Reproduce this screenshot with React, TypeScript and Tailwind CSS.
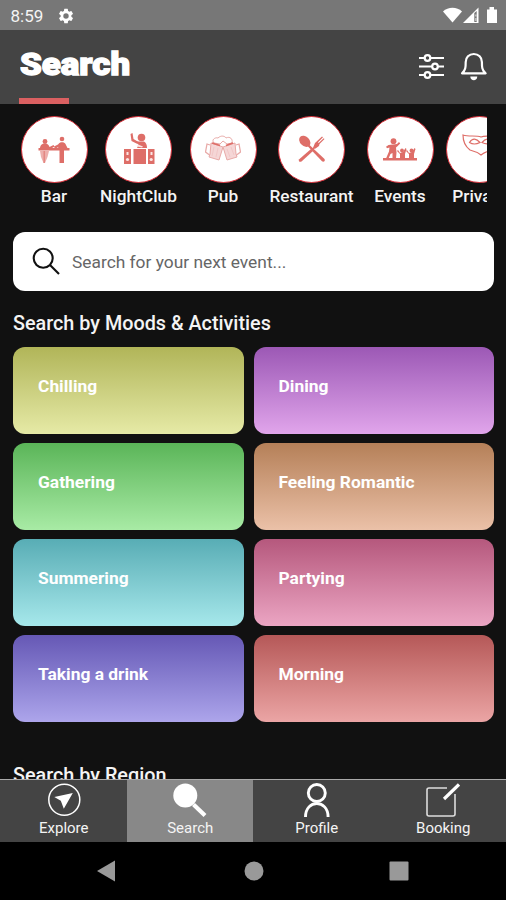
import type { ReactNode } from "react";

const RED = "#de6e68";

function BarIcon() {
  return (
    <svg width="34" height="30" viewBox="0 0 34 30" fill={RED}>
      <rect x="1.500" y="13" width="31" height="2.500" />
      <circle cx="8" cy="6.500" r="2.400" />
      <path d="M3 14c0-4 2-5.500 5-5.500s4 2 4.500 3.500l4-2 1 1.500-4 2.500z" />
      <circle cx="25" cy="4" r="2.300" />
      <path d="M21 14l.5-5c1-2.500 6-2.500 7 0l2.500 5z" />
      <path d="M17 11.500l5-2.500 1 2-5 3z" />
      <rect x="22.500" y="15" width="4.500" height="13" />
      <path d="M3 16h9l-1.500 6-2.500 6H6.500L4 22z" opacity=".55" />
      <path d="M6.500 16h1.500v12H6.500z" opacity=".6" />
    </svg>
  );
}

function ClubIcon() {
  return (
    <svg width="32" height="33" viewBox="0 0 32 33" fill={RED}>
      <path d="M7.500 2l2-1 1 6 5 3-1 2-6-3z" />
      <circle cx="18.500" cy="5.500" r="3.800" />
      <path d="M13 9.500h8c2 1 3 3.500 3 6.500H14l1.500-3z" />
      <rect x="10.500" y="17" width="12.500" height="15" />
      <rect x="1" y="17" width="7" height="15" />
      <rect x="25" y="17" width="6.500" height="15" />
      <g fill="#fbe6e4">
        <path d="M3.500 20h2v3h-2zM27.500 20h2v3h-2z" />
        <circle cx="4.500" cy="27.500" r="1.600" />
        <circle cx="28.200" cy="27.500" r="1.600" />
        <path d="M15 12.500l5 2-1 1-5-1z" />
      </g>
    </svg>
  );
}

function PubIcon() {
  return (
    <svg width="36" height="27" viewBox="0 0 36 27" fill="none" stroke="#e8aaa8" strokeWidth="1">
      <path d="M6 8l12 4-4 13-10-3 1-3z" fill="#f5d6d6" />
      <path d="M30 8l-12 4 4 13 10-3-1-3z" fill="#f5d6d6" />
      <path d="M5 10l-3-1-1.500 8 4 3M31 10l3-1 1.500 8-4 3" strokeWidth="1.300" />
      <path d="M9 8C6 5 10 2 13 3c3-3 7-2 8 0 4-2 7 1 6 5l-5 1-4-3-3 3z" fill="#fff" />
      <path d="M7 8l8 2.500M21 10.500l7-2.500" stroke="#de6e68" strokeWidth="1.800" />
      <path d="M9 12l-2 9M13 13l-2 9M22 14l3 8M26 12l3 8" opacity=".35" />
    </svg>
  );
}

function CutleryIcon() {
  return (
    <svg width="28" height="28" viewBox="0 0 28 28" fill={RED}>
      <ellipse cx="6.800" cy="6.300" rx="4.700" ry="6.400" transform="rotate(-45 6.800 6.300)" />
      <path d="M9.500 11l1.500-1.500L26.500 24c1.200 2-1 3.500-2.500 2.300z" />
      <path d="M13 14l2 2L3.500 26.500c-2 1.200-3.500-.8-2.300-2.300z" />
      <path d="M14.500 14l2.500-6L24 1.500l1 .7-5 5 .7.7 5-4.700.8.9-5 4.800-.5 2-3.500 2.600-2 .5-1.500 1.500z" />
    </svg>
  );
}

function EventsIcon() {
  return (
    <svg width="34" height="24" viewBox="0 0 34 24" fill={RED}>
      <circle cx="10.500" cy="3.200" r="2.900" />
      <path d="M5.500 7l8.500-1 2-2 1.200 1.500-3 3-1.200 1 .5 5-.5 6h-3.500v-5.500l-2 1-2 4.500H3l3-7 .5-4-2.500.8-1-1.500z" />
      <path d="M0 20h34v2.500H0z" />
      <path d="M15 12l2 3 3-1 2.500-4 1 1-1.500 5v4h-5v-4l-3-3zM24 12l2 3 3-1 2.500-4 1 1-1.500 5v4h-5v-4l-3-3z" />
      <circle cx="19" cy="12.500" r="1.900" />
      <circle cx="28.500" cy="12.500" r="1.900" />
    </svg>
  );
}

function MaskIcon() {
  return (
    <svg width="38" height="24" viewBox="0 0 38 24" fill="none" stroke={RED} strokeWidth="1.200">
      <path d="M1 2c6 2 13 0 18 2 5-2 12 0 18-2 0 6-2 12-6 15-5 1-8 2-12 5-4-3-7-4-11-5C4 14 1 8 1 2z" />
      <path d="M7.500 9.500c3-5 7-4 10.500 0-4 2-7.500 2-10.500 0zM30.500 9.500c-3-5-7-4-10.500 0 4 2 7.500 2 10.500 0z" />
    </svg>
  );
}

const categories: { label: string; box: string; icon: ReactNode; pad: string }[] = [
  { label: "Bar", box: "w-[67px]", icon: <BarIcon />, pad: "" },
  { label: "NightClub", box: "w-[77px]", icon: <ClubIcon />, pad: "pb-[2px]" },
  { label: "Pub", box: "w-[67px]", icon: <PubIcon />, pad: "pb-[2px]" },
  { label: "Restaurant", box: "w-[85px]", icon: <CutleryIcon />, pad: "pb-[1px]" },
  { label: "Events", box: "w-[67px]", icon: <EventsIcon />, pad: "" },
  { label: "Private", box: "w-[67px]", icon: <MaskIcon />, pad: "pb-[10px] pl-[2px]" },
];

const moods = [
  { label: "Chilling", color: "from-[#b1b558] to-[#e6eaa6]" },
  { label: "Dining", color: "from-[#9c58b5] to-[#e1a5eb]" },
  { label: "Gathering", color: "from-[#5ab558] to-[#a8eba5]" },
  { label: "Feeling Romantic", color: "from-[#b58058] to-[#ebc1a8]" },
  { label: "Summering", color: "from-[#58adb5] to-[#a6e8eb]" },
  { label: "Partying", color: "from-[#b5587d] to-[#eba5c3]" },
  { label: "Taking a drink", color: "from-[#6658b5] to-[#ada5eb]" },
  { label: "Morning", color: "from-[#b55858] to-[#eba5a5]" },
];

function StatusBar() {
  return (
    <div className="flex h-[30px] shrink-0 items-center bg-[#777] pl-[10.500px] pr-[8px] text-[#f4f4f4]">
      <span className="mt-[2px] w-[46.500px] text-[17px] leading-none">8:59</span>
      <svg className="mt-px" width="18" height="18" viewBox="0 0 24 24" fill="white">
        <path d="M19.140 12.940a7 7 0 0 0 0-1.880l2.030-1.580a.5.5 0 0 0 .12-.61l-1.920-3.320a.5.5 0 0 0-.59-.22l-2.390.96a7 7 0 0 0-1.620-.94l-.36-2.540a.5.5 0 0 0-.48-.41h-3.840a.5.5 0 0 0-.47.41l-.36 2.540a7 7 0 0 0-1.620.94l-2.390-.96a.5.5 0 0 0-.59.22L2.740 8.870a.5.5 0 0 0 .12.61l2.030 1.580a7 7 0 0 0 0 1.880l-2.030 1.580a.5.5 0 0 0-.12.61l1.920 3.320c.12.220.370.290.590.220l2.390-.96c.5.380 1.030.7 1.620.940l.36 2.540c.05.240.240.410.480.410h3.840c.24 0 .44-.17.470-.41l.36-2.540a7 7 0 0 0 1.620-.94l2.390.96c.22.080.470 0 .59-.22l1.920-3.320a.5.5 0 0 0-.12-.61zM12 15.600a3.600 3.600 0 1 1 0-7.200 3.600 3.600 0 0 1 0 7.200z" />
      </svg>
      <svg className="ml-auto" width="55" height="18" viewBox="0 0 55 18" fill="white">
        <path d="M0 5.500C5 .6 14 .6 19 5.500L9.500 16.500z" />
        <path d="M35.500 1.500V17H20z" />
        <path d="M31.300 7v9h2.400V5z" fill="#777" />
        <path d="M32.500 8.500v2h.8v-2zM32.500 12v3h.8v-3z" />
        <path d="M44 3.500h2.500V1H51v2.500h3V17H44z" />
      </svg>
    </div>
  );
}

function Header() {
  return (
    <header className="flex h-[74px] shrink-0 flex-col justify-between bg-[#444]">
      <div className="flex h-[68px] items-center pl-[19.500px] pr-[19px]">
        <h1 className="origin-left scale-x-[1.090] text-[32px] font-black leading-none text-white [-webkit-text-stroke:1.400px_white]">
          Search
        </h1>
        <svg className="ml-auto mt-[5px]" width="27" height="27" viewBox="0 0 27 27" fill="none" stroke="white" strokeWidth="2.200">
          <path d="M1 5h5.500M12 5h14M1 13.500h13M19.500 13.500h6.500M1 22h5.500M12 22h14" />
          <circle cx="9.500" cy="5" r="2.800" />
          <circle cx="17" cy="13.500" r="2.800" />
          <circle cx="9.500" cy="22" r="2.800" />
        </svg>
        <svg className="ml-[15px] mt-[4px]" width="27" height="30" viewBox="0 0 27 30" fill="none" stroke="white" strokeWidth="2.200" strokeLinejoin="round">
          <path d="M2 22.300c3.700-3 3.700-6.800 3.700-11.300 0-4.500 3.300-8 8.100-8s8.100 3.500 8.100 8c0 4.500 0 8.300 3.700 11.300z" />
          <path d="M10.300 25.500h7c0 5-7 5-7 0z" fill="white" stroke="none" />
        </svg>
      </div>
      <div className="ml-[18.500px] h-[6px] w-[50px] bg-[#db6061]" />
    </header>
  );
}

const tabs: { label: string; icon: ReactNode }[] = [
  {
    label: "Explore",
    icon: (
      <svg width="34" height="34" viewBox="0 0 34 34">
        <circle cx="17.300" cy="16.700" r="15.500" fill="none" stroke="white" strokeWidth="1.500" />
        <path d="M25.800 10L7.300 14l6.500 3.800 3 8z" fill="white" />
      </svg>
    ),
  },
  {
    label: "Search",
    icon: (
      <svg width="34" height="34" viewBox="0 0 34 34">
        <circle cx="12.300" cy="12.500" r="12" fill="white" />
        <path d="M20.500 21.500L32 32.500" stroke="white" strokeWidth="4.200" />
      </svg>
    ),
  },
  {
    label: "Profile",
    icon: (
      <svg width="34" height="34" viewBox="0 0 34 34" fill="none" stroke="white" strokeWidth="2.900">
        <circle cx="16.800" cy="10" r="8.500" />
        <path d="M5.500 34c0-18 22.600-18 22.600 0" />
      </svg>
    ),
  },
  {
    label: "Booking",
    icon: (
      <svg width="34" height="34" viewBox="0 0 34 34" fill="none" stroke="#ddd">
        <path d="M21 5H3a2 2 0 0 0-2 2v24a2 2 0 0 0 2 2h24a2 2 0 0 0 2-2V11" strokeWidth="1.600" />
        <path d="M18 16L33 1.500" stroke="white" strokeWidth="3.200" />
      </svg>
    ),
  },
];

export default function App() {
  return (
    <div className="flex h-[900px] w-[506px] flex-col overflow-hidden bg-[#111] font-['Roboto',sans-serif] text-[#f4f4f4]">
      <StatusBar />
      <Header />
      <main className="flex min-h-0 flex-1 flex-col overflow-hidden">
        <div className="ml-[20.500px] mr-[19px] flex h-[128px] shrink-0 gap-[12.500px] overflow-hidden pt-[12px]">
          {categories.map((c) => (
            <div key={c.label} className={`flex shrink-0 flex-col items-center ${c.box}`}>
              <div className={`flex size-[67px] shrink-0 items-center justify-center rounded-full border border-[#d8303a] bg-white ${c.pad}`}>
                {c.icon}
              </div>
              <span className="mt-[3px] whitespace-nowrap text-[17.300px] font-medium leading-[20px]">{c.label}</span>
            </div>
          ))}
        </div>
        <div className="ml-[13px] mr-[12px] flex h-[59px] shrink-0 items-center rounded-[12px] bg-white pl-[19px]">
          <svg width="29" height="29" viewBox="0 0 29 29" fill="none" stroke="#111" strokeWidth="2.100">
            <circle cx="11.200" cy="11.200" r="9.500" />
            <path d="M18 18l9 9" />
          </svg>
          <span className="ml-[11px] mt-[2px] text-[17.350px] leading-none text-[#666]">Search for your next event...</span>
        </div>
        <h2 className="ml-[13px] mt-[21px] shrink-0 text-[19.800px] font-medium leading-[24px]">Search by Moods &amp; Activities</h2>
        <div className="ml-[13px] mr-[12px] mt-[11px] grid shrink-0 grid-cols-[231px_240.500px] gap-x-[9.500px] gap-y-[9px]">
          {moods.map((m) => (
            <div key={m.label} className={`h-[87px] rounded-[12px] bg-linear-to-b pl-[25px] pt-[28px] ${m.color}`}>
              <span className="text-[17.400px] font-bold leading-[22px] text-white">{m.label}</span>
            </div>
          ))}
        </div>
        <h2 className="ml-[13px] mt-[42px] shrink-0 text-[19.800px] font-medium leading-[24px]">Search by Region</h2>
      </main>
      <nav className="grid h-[63px] shrink-0 grid-cols-4 border-t border-[#aaa] bg-[#444]">
        {tabs.map((t, i) => (
          <div key={t.label} className={`flex flex-col items-center pl-px pt-[3px] ${i === 1 ? "bg-[#888]" : ""}`}>
            {t.icon}
            <span className="mt-[3px] text-[15px] leading-[17px]">{t.label}</span>
          </div>
        ))}
      </nav>
      <div className="flex h-[58px] shrink-0 items-center bg-black pl-[96px]">
        <svg width="314" height="22" viewBox="0 0 314 22" fill="#999">
          <path d="M1 11L19 .5v21z" />
          <circle cx="158" cy="11" r="9.500" />
          <rect x="293.500" y="1.500" width="19" height="19" rx="1" />
        </svg>
      </div>
    </div>
  );
}
